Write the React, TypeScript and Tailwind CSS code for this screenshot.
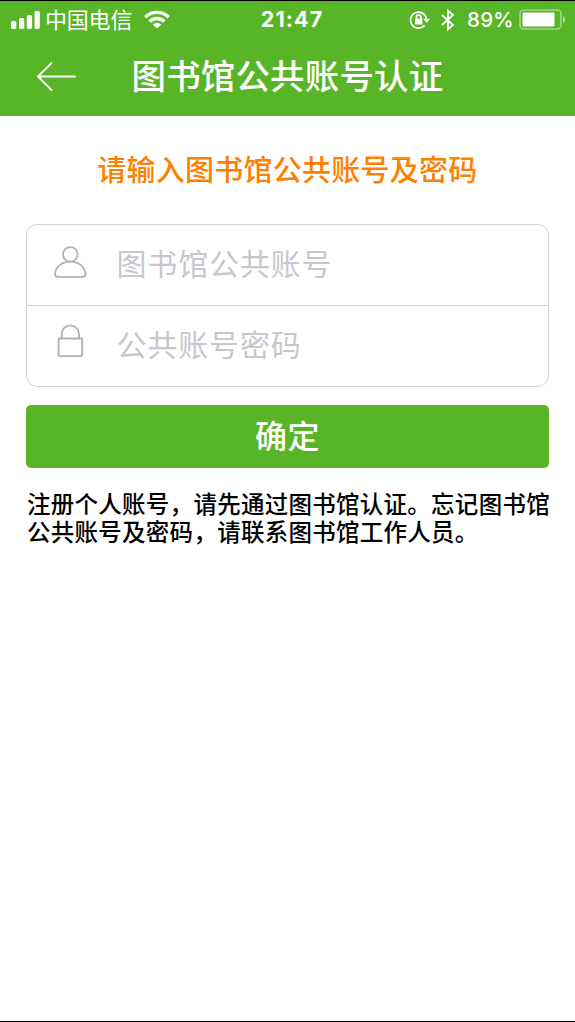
import React from "react";

function StatusBar() {
  return (
    <div className="flex h-[37px] items-center pl-[11px] pr-[9px]">
      <div className="flex flex-1 items-center">
        <svg width="30" height="18" viewBox="0 0 30 18" fill="white">
          <rect x="0" y="10" width="5.3" height="8" rx="1.5" />
          <rect x="8" y="7" width="5.3" height="11" rx="1.5" />
          <rect x="15.8" y="4" width="5.3" height="14" rx="1.5" />
          <rect x="23.5" y="0" width="5.3" height="18" rx="1.5" />
        </svg>
        <span className="ml-[4px] pb-[4px] text-[22px] leading-none tracking-[-0.2px]">中国电信</span>
        <svg className="ml-[12px]" width="26" height="19" viewBox="0 0 26 19" fill="none" stroke="white" strokeWidth="3.4">
          <path d="M1.3 7.2 A16.5 16.5 0 0 1 24.7 7.2" />
          <path d="M5.6 11.6 A10.4 10.4 0 0 1 20.4 11.6" />
          <path d="M13 18.6 L8.8 14.5 A6 6 0 0 1 17.2 14.5 Z" fill="white" stroke="none" />
        </svg>
      </div>
      <span className="ml-[7px] pt-px font-[Inter] text-[21.5px] font-bold leading-none tracking-[1.1px]">21:47</span>
      <div className="flex flex-1 items-center justify-end">
        <svg width="22" height="20" viewBox="0 0 22 20" fill="none" stroke="white" strokeWidth="1.7">
          <path d="M15.6 15.4 A8 8 0 1 1 17.4 8.6" />
          <path d="M14.4 8.8 H21 L17.7 13 Z" fill="white" stroke="none" />
          <rect x="6" y="8.8" width="7.4" height="5.8" rx="0.8" fill="white" stroke="none" />
          <path d="M7.4 9 V7.4 A2.3 2.3 0 0 1 12 7.4 V9" />
        </svg>
        <svg className="ml-[10px]" width="14" height="22" viewBox="0 0 14 22" fill="none" stroke="white" strokeWidth="1.8">
          <path d="M1 6 L12 16 L7 20.5 V1.5 L12 6 L1 16" />
        </svg>
        <span className="ml-[12px] pt-[2px] font-[Inter] text-[20.5px] font-medium leading-none tracking-[0.3px]">89%</span>
        <svg className="ml-[5px]" width="47" height="21" viewBox="0 0 47 21">
          <rect x="1" y="1" width="41" height="19" rx="4" fill="none" stroke="white" strokeOpacity="0.45" strokeWidth="1.6" />
          <rect x="3.5" y="3.5" width="32" height="14" rx="1" fill="white" />
          <path d="M44 7 Q46.2 8 46.2 10.5 T44 14 Z" fill="white" fillOpacity="0.5" />
        </svg>
      </div>
    </div>
  );
}

function UserIcon() {
  return (
    <svg width="34" height="34" viewBox="0 0 34 34" fill="none" stroke="#b2b2b2" strokeWidth="1.8">
      <circle cx="16.3" cy="8.4" r="7.3" />
      <path d="M16.3 15.7 C7 15.7 1.1 22 1.1 28.2 Q1.1 30.9 4 30.9 H28.6 Q31.5 30.9 31.5 28.2 C31.5 22 25.6 15.7 16.3 15.7 Z" />
    </svg>
  );
}

function LockIcon() {
  return (
    <svg width="34" height="34" viewBox="0 0 34 34" fill="none" stroke="#b2b2b2" strokeWidth="1.9">
      <rect x="4.6" y="14.5" width="23.6" height="17.6" rx="1.2" />
      <path d="M7.8 14.5 V10 A8.6 8.6 0 0 1 25 10 V14.5" />
    </svg>
  );
}

const inputClass =
  "ml-[28.5px] h-full min-w-0 flex-1 bg-transparent pb-[6px] text-[30px] tracking-[0.85px] text-black outline-none placeholder:text-[#c7c7cd]";

export default function App() {
  return (
    <div className="flex h-[1022px] w-[575px] flex-col border-y border-black bg-white font-['Noto_Sans_CJK_SC',sans-serif]">
      <header className="h-[115px] shrink-0 bg-[#59b528] text-white">
        <StatusBar />
        <div className="flex h-[76px] items-center pl-[36px]">
          <svg width="41" height="30" viewBox="0 0 41 30" fill="none" stroke="white" strokeWidth="1.8" strokeLinecap="round" strokeLinejoin="round">
            <path d="M39 15.5 H2 M15.5 2 L2 15.5 L15.5 29" />
          </svg>
          <h1 className="ml-[54.5px] whitespace-nowrap pb-[3px] text-[34.5px] font-medium leading-none tracking-[0.15px]">图书馆公共账号认证</h1>
        </div>
      </header>
      <main className="px-[26px] pt-[34px]">
        <p className="whitespace-nowrap text-center text-[29px] font-medium leading-[36px] tracking-[0.25px] text-[#ff7f00]">请输入图书馆公共账号及密码</p>
        <form className="mt-[38px]" onSubmit={(e) => e.preventDefault()}>
          <div className="h-[163px] overflow-hidden rounded-[11px] border border-[#d2d2d5]">
            <label className="flex h-[81px] items-center border-b border-[#d2d2d5] pl-[27px]">
              <span className="-mt-[5px]"><UserIcon /></span>
              <input type="text" placeholder="图书馆公共账号" className={inputClass} />
            </label>
            <label className="flex h-[80px] items-center pl-[27px]">
              <span className="-mt-[10px]"><LockIcon /></span>
              <input type="password" placeholder="公共账号密码" className={inputClass} />
            </label>
          </div>
          <button className="mt-[18px] h-[63px] w-full rounded-[5px] bg-[#59b528] pb-[5px] text-[32px] font-medium leading-none tracking-[0.6px] text-white">确定</button>
        </form>
        <div className="ml-[1px] mt-[21px] whitespace-nowrap text-[23.5px] font-medium leading-[28px] tracking-[0.27px] text-black">
          <p>注册个人账号，请先通过图书馆认证。忘记图书馆</p>
          <p>公共账号及密码，请联系图书馆工作人员。</p>
        </div>
      </main>
    </div>
  );
}
